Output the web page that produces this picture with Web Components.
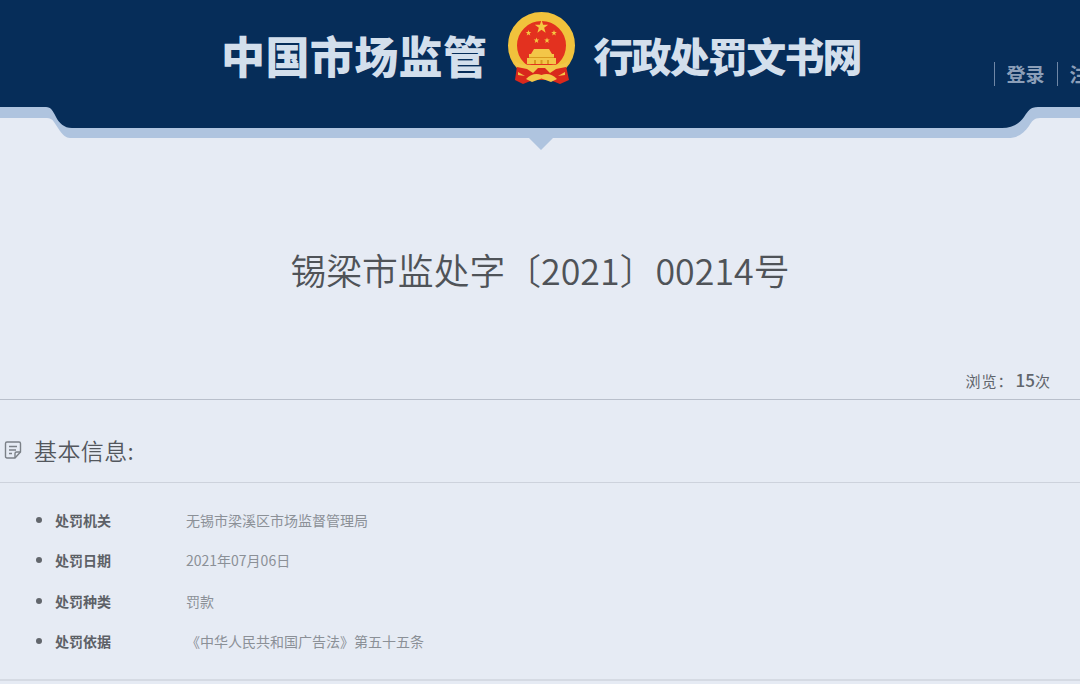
<!DOCTYPE html>
<html lang="zh-CN">
<head>
<meta charset="utf-8">
<title>行政处罚文书网</title>
<style>
  html, body { margin: 0; height: 100%; }
  body {
    background: #e6ebf4;
    color: #4d5157;
    font-family: "Noto Sans CJK SC", "Liberation Sans", sans-serif;
    overflow: hidden;
  }
</style>
</head>
<body>
<site-header></site-header>
<doc-title>锡梁市监处字〔2021〕00214号</doc-title>
<view-count count="15"></view-count>
<info-section heading="基本信息:">
  <info-row label="处罚机关">无锡市梁溪区市场监督管理局</info-row>
  <info-row label="处罚日期">2021年07月06日</info-row>
  <info-row label="处罚种类">罚款</info-row>
  <info-row label="处罚依据">《中华人民共和国广告法》第五十五条</info-row>
</info-section>

<script>
const starPoints = (cx, cy, r) => {
  const pts = [];
  for (let i = 0; i < 10; i++) {
    const rad = i % 2 ? r * 0.4 : r;
    const a = -Math.PI / 2 + i * Math.PI / 5;
    pts.push(`${ (cx + rad * Math.cos(a)).toFixed(2) },${ (cy + rad * Math.sin(a)).toFixed(2) }`);
  }
  return pts.join(' ');
};

const headerTemplate = document.createElement('template');
headerTemplate.innerHTML = `
  <style>
    :host {
      display: block;
      position: relative;
      height: 150px;
      overflow: hidden;
    }
    svg.shape {
      position: absolute;
      inset: 0;
      width: 1080px;
      height: 150px;
    }
    .bar {
      position: relative;
      display: flex;
      align-items: flex-start;
      height: 100px;
      padding-left: 221px;
      font-weight: 900;
      color: #d3dfec;
      white-space: nowrap;
    }
    .name {
      line-height: 48px;
      margin-top: 31px;
    }
    .name.first { font-size: 44px; letter-spacing: 0.4px; width: 269px; }
    .name.second { font-size: 40px; letter-spacing: -1.8px; width: 267px; }
    .emblem {
      width: 100px;
      height: 90px;
      flex: none;
      margin-left: 6px;
    }
    nav {
      display: flex;
      align-items: center;
      height: 24px;
      margin: 62px 0 0 134px;
      font-size: 19px;
      font-weight: 700;
      color: #8c9fb8;
    }
    nav a { padding-inline: 11px 13px; line-height: 24px; border-left: 1px solid #6f87a6; }
  </style>
  <svg class="shape" viewBox="0 0 1080 150" aria-hidden="true">
    <path fill="#afc4df" d="M0 107H1080V118H1040C1034 118 1032 121 1029 126C1024 133 1018 138 1008 138H553L541 150L529 138H70C66 138 63 135 60 131L54 122C52 119 50 118 47 118H0Z"/>
    <path fill="#062d59" d="M0 0H1080V107H1038C1030 107 1028 111 1024 117C1019 124 1012 128 1002 128H72C64 128 59 123 56 117C53 111 51 107 46 107H0Z"/>
  </svg>
  <div class="bar">
    <span class="name first">中国市场监管</span>
    <svg class="emblem" viewBox="0 0 100 90" aria-hidden="true">
      <circle cx="48.500" cy="45.500" r="29" fill="#e3311f" stroke="#f1c23c" stroke-width="9"/>
      <path fill="#d9281c" d="M24 66L33 66H64L73 66L76 80L67 84L57 80H40L30 84L22 80Z"/>
      <polygon fill="#f5c842" points="${ starPoints(48.5, 27, 7) }"/>
      <polygon fill="#f5c842" points="${ starPoints(35.5, 33, 3) }"/>
      <polygon fill="#f5c842" points="${ starPoints(61, 33, 3) }"/>
      <polygon fill="#f5c842" points="${ starPoints(43.5, 40.500, 3) }"/>
      <polygon fill="#f5c842" points="${ starPoints(54, 40.500, 3) }"/>
      <path fill="#f3c648" d="M41 49H56L59 54H61V58H63V64H34V58H36V54H38Z"/>
      <path fill="#d9991f" d="M36 57H61V58H36ZM41 60H43V64H41ZM47.500 60H49.500V64H47.500ZM54 60H56V64H54Z"/>
      <path fill="#f3c648" d="M21 60C27 66 33 64 39 65H58C64 64 70 66 76 60L73 67L63 69L57 73L52 68H45L40 73L34 69L24 67Z"/>
      <path fill="#f3c648" d="M33 79Q40 72 48.500 75Q57 72 64 79L58 82L48.500 78.500L39 82Z"/>
      <path fill="#f3c648" d="M25 72L32 76L25 75ZM72 72L65 76L72 75Z"/>
    </svg>
    <span class="name second">行政处罚文书网</span>
    <nav><a>登录</a><a>注册</a></nav>
  </div>
`;

class SiteHeader extends HTMLElement {
  constructor() {
    super();
    this.attachShadow({ mode: 'open' }).appendChild(headerTemplate.content.cloneNode(true));
  }
}

class DocTitle extends HTMLElement {
  constructor() {
    super();
    this.attachShadow({ mode: 'open' }).innerHTML = `
      <style>
        :host {
          display: block;
          height: 216px;
          padding-top: 93px;
          box-sizing: border-box;
          text-align: center;
          font-size: 35.800px;
          line-height: 52px;
          font-weight: 350;
          color: #4f5358;
        }
      </style>
      <slot></slot>
    `;
  }
}

class ViewCount extends HTMLElement {
  constructor() {
    super();
    this.attachShadow({ mode: 'open' }).innerHTML = `
      <style>
        :host {
          display: block;
          height: 33px;
          padding-right: 30px;
          border-bottom: 1px solid #b9bfcb;
          text-align: right;
          font-size: 15px;
          line-height: 28px;
          color: #60656c;
        }
        span { letter-spacing: 1px; }
        b { margin-left: 2px; font-size: 17px; font-weight: 500; }
      </style>
      <span>浏览：</span><b>${ this.getAttribute('count') }</b>次
    `;
  }
}

class InfoSection extends HTMLElement {
  constructor() {
    super();
    this.attachShadow({ mode: 'open' }).innerHTML = `
      <style>
        :host { display: block; }
        header {
          display: flex;
          align-items: center;
          gap: 12px;
          height: 83px;
          padding: 17px 0 0 4px;
          box-sizing: border-box;
          border-bottom: 1px solid #cdd2dc;
          font-size: 23px;
          font-weight: 350;
          color: #53575d;
        }
        svg { width: 18px; height: 20px; flex: none; }
        span { letter-spacing: 0.4px; }
        .rows {
          display: flex;
          flex-direction: column;
          gap: 12.400px;
          height: 198px;
          padding: 23px 0 0 36px;
          box-sizing: border-box;
          border-bottom: 2px solid #d5dae3;
        }
      </style>
      <header>
        <svg viewBox="0 0 18 20" fill="none" stroke="#7b8087" stroke-width="1.400" aria-hidden="true">
          <path d="M1.500 3.500Q1.500 2 3 2H15Q16.500 2 16.500 3.500V12L11 18H3Q1.500 18 1.500 16.500Z"/>
          <path d="M11 18V13.500Q11 12 12.500 12H16.500M5 6.500H13M5 10H12M5 13.500H8"/>
        </svg>
        <span>${ this.getAttribute('heading') }</span>
      </header>
      <div class="rows"><slot></slot></div>
    `;
  }
}

class InfoRow extends HTMLElement {
  constructor() {
    super();
    this.attachShadow({ mode: 'open' }).innerHTML = `
      <style>
        :host {
          display: flex;
          align-items: center;
          height: 28px;
          font-size: 14px;
          color: #8b9097;
        }
        i {
          width: 6px;
          height: 6px;
          flex: none;
          margin-right: 13px;
          border-radius: 50%;
          background: #62666c;
        }
        b {
          width: 131px;
          flex: none;
          font-weight: 700;
          color: #5d6167;
        }
      </style>
      <i></i><b>${ this.getAttribute('label') }</b><span><slot></slot></span>
    `;
  }
}

customElements.define('site-header', SiteHeader);
customElements.define('doc-title', DocTitle);
customElements.define('view-count', ViewCount);
customElements.define('info-section', InfoSection);
customElements.define('info-row', InfoRow);
</script>
</body>
</html>
